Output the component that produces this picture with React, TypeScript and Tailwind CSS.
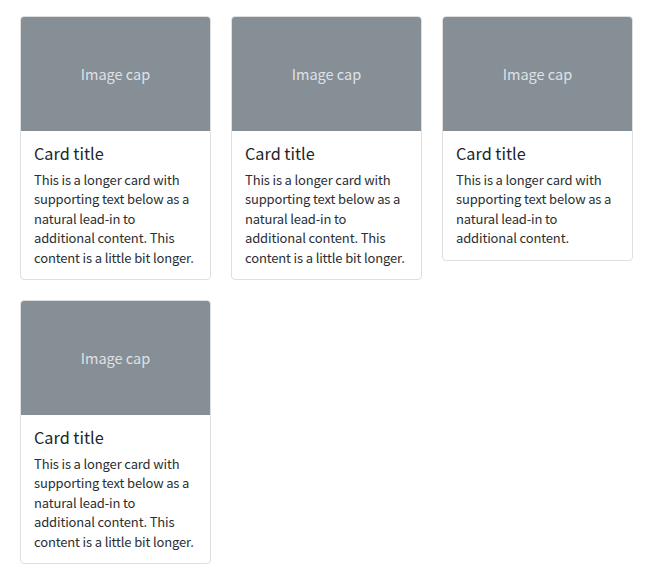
import React from "react";

const cards = [
  "This is a longer card with supporting text below as a natural lead-in to additional content. This content is a little bit longer.",
  "This is a longer card with supporting text below as a natural lead-in to additional content. This content is a little bit longer.",
  "This is a longer card with supporting text below as a natural lead-in to additional content.",
  "This is a longer card with supporting text below as a natural lead-in to additional content. This content is a little bit longer.",
];

function Card({ text }: { text: string }) {
  return (
    <div className="flex flex-col border border-[#dfdfdf] rounded-[4px] overflow-hidden bg-white">
      <div className="h-[114px] bg-[#868e96] flex items-center justify-center text-[#dee2e6] text-[14.5px]">
        Image cap
      </div>
      <div className="pt-[13px] px-[13px] pb-[12px]">
        <h5 className="text-[16.25px] leading-[19.5px] text-[#212529] mb-[6px]">Card title</h5>
        <p className="text-[13px] leading-[19.5px] tracking-[-0.15px] text-[#2b2f33]">{text}</p>
      </div>
    </div>
  );
}

export default function App() {
  return (
    <div
      className="bg-white min-h-[581px] pt-[16px] pl-[20px]"
      style={{ fontFamily: '"Noto Sans CJK KR", "Noto Sans", sans-serif' }}
    >
      <div className="grid grid-cols-[191px_191px_191px] gap-x-[20px] gap-y-[20px] items-start">
        {cards.map((t, i) => (
          <Card key={i} text={t} />
        ))}
      </div>
    </div>
  );
}
